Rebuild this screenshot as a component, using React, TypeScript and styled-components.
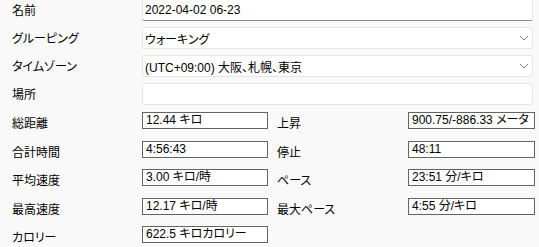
import React from "react";
import styled, { createGlobalStyle } from "styled-components";

const GlobalStyle = createGlobalStyle`
  body {
    margin: 0;
    background: #f9f9f9;
    font-family: "Liberation Sans", "Noto Sans CJK JP", sans-serif;
    font-size: 12px;
    color: #000;
    font-feature-settings: "palt";
  }
`;

const Page = styled.div`
  width: 539px;
  height: 247px;
  overflow: hidden;
  padding-left: 12px;
  box-sizing: border-box;
`;

const TopForm = styled.div`
  display: flex;
  flex-direction: column;
  gap: 6px;
  margin-top: -1px;
`;

const Row = styled.div`
  display: flex;
  align-items: center;
  height: 22px;
`;

const Label = styled.div`
  width: 130px;
  flex: none;
  line-height: 16px;
  padding-top: 1px;
  white-space: nowrap;
`;

const Field = styled.div<{ $accent?: boolean }>`
  width: 391px;
  height: 22px;
  box-sizing: border-box;
  background: #fff;
  border: 1px solid #e5e5e5;
  border-bottom-color: ${(p) => (p.$accent ? "#8a8a8a" : "#e5e5e5")};
  border-radius: 2px;
  display: flex;
  align-items: center;
  justify-content: space-between;
  padding: 0 3px 0 2px;
  white-space: nowrap;
`;

const Chevron = () => (
  <svg width="10" height="6" viewBox="0 0 10 6">
    <path d="M1 1 L5 5 L9 1" fill="none" stroke="#7a7a7a" strokeWidth="1" />
  </svg>
);

const StatsGrid = styled.div`
  display: grid;
  grid-template-columns: 130px 126px 140px 127px;
  grid-auto-rows: 17px;
  row-gap: 11.5px;
  margin-top: 7px;
`;

const StatLabel = styled.div<{ $right?: boolean }>`
  padding-top: 4px;
  padding-left: ${(p) => (p.$right ? "9px" : "0")};
  line-height: 16px;
  white-space: nowrap;
`;

const ReadOnly = styled.div`
  height: 17px;
  box-sizing: border-box;
  border: 1px solid #646464;
  background: #fff;
  padding: 0 3px;
  line-height: 14px;
  white-space: nowrap;
  overflow: hidden;
`;

const stats: [string, string, string?, string?][] = [
  ["総距離", "12.44 キロ", "上昇", "900.75/-886.33 メータ"],
  ["合計時間", "4:56:43", "停止", "48:11"],
  ["平均速度", "3.00 キロ/時", "ペース", "23:51 分/キロ"],
  ["最高速度", "12.17 キロ/時", "最大ペース", "4:55 分/キロ"],
  ["カロリー", "622.5 キロカロリー"],
];

export default function App() {
  return (
    <Page>
      <GlobalStyle />
      <TopForm>
        <Row>
          <Label>名前</Label>
          <Field $accent>2022-04-02 06-23</Field>
        </Row>
        <Row>
          <Label>グルーピング</Label>
          <Field>
            <span>ウォーキング</span>
            <Chevron />
          </Field>
        </Row>
        <Row>
          <Label>タイムゾーン</Label>
          <Field>
            <span>(UTC+09:00) 大阪、札幌、東京</span>
            <Chevron />
          </Field>
        </Row>
        <Row>
          <Label>場所</Label>
          <Field />
        </Row>
      </TopForm>
      <StatsGrid>
        {stats.map(([l1, v1, l2, v2]) => (
          <React.Fragment key={l1}>
            <StatLabel>{l1}</StatLabel>
            <ReadOnly>{v1}</ReadOnly>
            {l2 ? <StatLabel $right>{l2}</StatLabel> : <div />}
            {v2 ? <ReadOnly>{v2}</ReadOnly> : <div />}
          </React.Fragment>
        ))}
      </StatsGrid>
    </Page>
  );
}
